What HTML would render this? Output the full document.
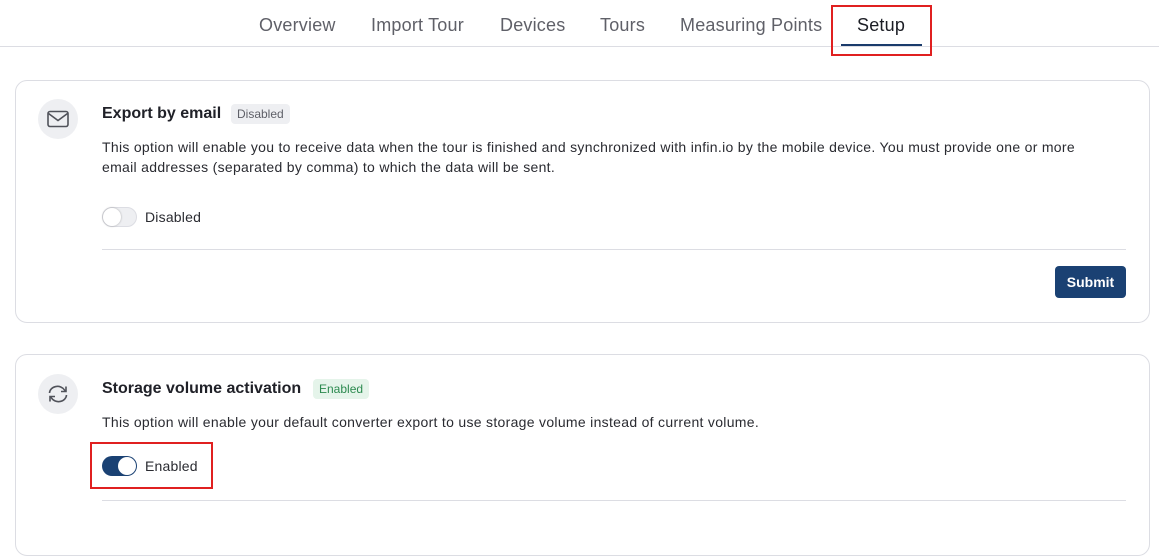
<!DOCTYPE html>
<html><head><style>
body{margin:0;width:1159px;height:510px;overflow:hidden;background:#fff;font-family:"Liberation Sans",sans-serif;color:#1f2128;position:relative}
.a{position:absolute}
.tab{position:absolute;top:15px;font-size:18px;color:#5f6068;white-space:nowrap;letter-spacing:0.2px}
.card{position:absolute;left:15px;width:1133px;border:1px solid #dcdde3;border-radius:12px;background:#fff}
.ic{position:absolute;left:38px;width:40px;height:40px;border-radius:50%;background:#eeeff2}
.title{position:absolute;left:102px;font-size:16px;font-weight:bold;color:#202128}
.badge{position:absolute;font-size:12px;padding:0 6px;height:20px;line-height:20px;border-radius:4px}
.desc{position:absolute;left:102px;font-size:14px;line-height:20px;color:#2a2b31;width:1050px;letter-spacing:0.3px;white-space:nowrap}
.tg{position:absolute;left:102px;width:35px;height:20px;border-radius:10px;box-sizing:border-box}
.lbl{position:absolute;left:145px;font-size:14px;color:#2a2b31;letter-spacing:0.2px}
.line{position:absolute;left:102px;width:1024px;height:1px;background:#dcdde3}
.red{position:absolute;border:2px solid #e02020;box-sizing:border-box}
</style></head><body>
<div class="tab" style="left:259px">Overview</div>
<div class="tab" style="left:371px">Import Tour</div>
<div class="tab" style="left:500px">Devices</div>
<div class="tab" style="left:600px">Tours</div>
<div class="tab" style="left:680px">Measuring Points</div>
<div class="tab" style="left:857px;color:#1b1d24">Setup</div>
<div class="a" style="left:0;top:46px;width:1159px;height:1px;background:#dcdde3"></div>
<div class="a" style="left:841px;top:44px;width:81px;height:2px;background:#1a3b6b"></div>
<div class="red" style="left:831px;top:5px;width:101px;height:51px"></div>

<div class="card" style="top:80px;height:241px"></div>
<div class="ic" style="top:99px"><svg width="40" height="40" viewBox="0 0 40 40"><rect x="10" y="12.5" width="20" height="15" rx="2" fill="none" stroke="#50525a" stroke-width="1.6"/><path d="M10.5 14.5l9.5 7 9.5-7" fill="none" stroke="#50525a" stroke-width="1.6"/></svg></div>
<div class="title" style="top:105px">Export by email</div>
<div class="badge" style="left:231px;top:104px;background:#eeeff2;color:#5f6068">Disabled</div>
<div class="desc" style="top:137px">This option will enable you to receive data when the tour is finished and synchronized with infin.io by the mobile device. You must provide one or more<br>email addresses (separated by comma) to which the data will be sent.</div>
<div class="tg" style="top:207px;background:#eeeff2;border:1px solid #dcdde3"><div class="a" style="left:0;top:0;width:18px;height:18px;border-radius:50%;background:#fff;box-shadow:0 0 2px rgba(0,0,0,.3)"></div></div>
<div class="lbl" style="top:209px">Disabled</div>
<div class="line" style="top:249px"></div>
<div class="a" style="left:1055px;top:266px;width:71px;height:32px;border-radius:4px;background:#1a4173;color:#fff;font-size:14px;font-weight:bold;text-align:center;line-height:32px">Submit</div>

<div class="card" style="top:354px;height:200px"></div>
<div class="ic" style="top:374px"><svg width="40" height="40" viewBox="0 0 40 40"><path d="M11.5 19a8 7 0 0 1 15-3l1 1.5M28.5 21a8 7 0 0 1-15 3l-1-1.5" fill="none" stroke="#50525a" stroke-width="1.6"/><path d="M28 12.5v5h-5M12 27.5v-5h5" fill="none" stroke="#50525a" stroke-width="1.6"/></svg></div>
<div class="title" style="top:380px">Storage volume activation</div>
<div class="badge" style="left:313px;top:379px;background:#e5f4ea;color:#2c8a4f">Enabled</div>
<div class="desc" style="top:412px">This option will enable your default converter export to use storage volume instead of current volume.</div>
<div class="tg" style="top:456px;background:#1a4173"><div class="a" style="left:16px;top:1px;width:18px;height:18px;border-radius:50%;background:#fff"></div></div>
<div class="lbl" style="top:458px">Enabled</div>
<div class="red" style="left:90px;top:442px;width:123px;height:47px"></div>
<div class="line" style="top:500px"></div>
</body></html>
